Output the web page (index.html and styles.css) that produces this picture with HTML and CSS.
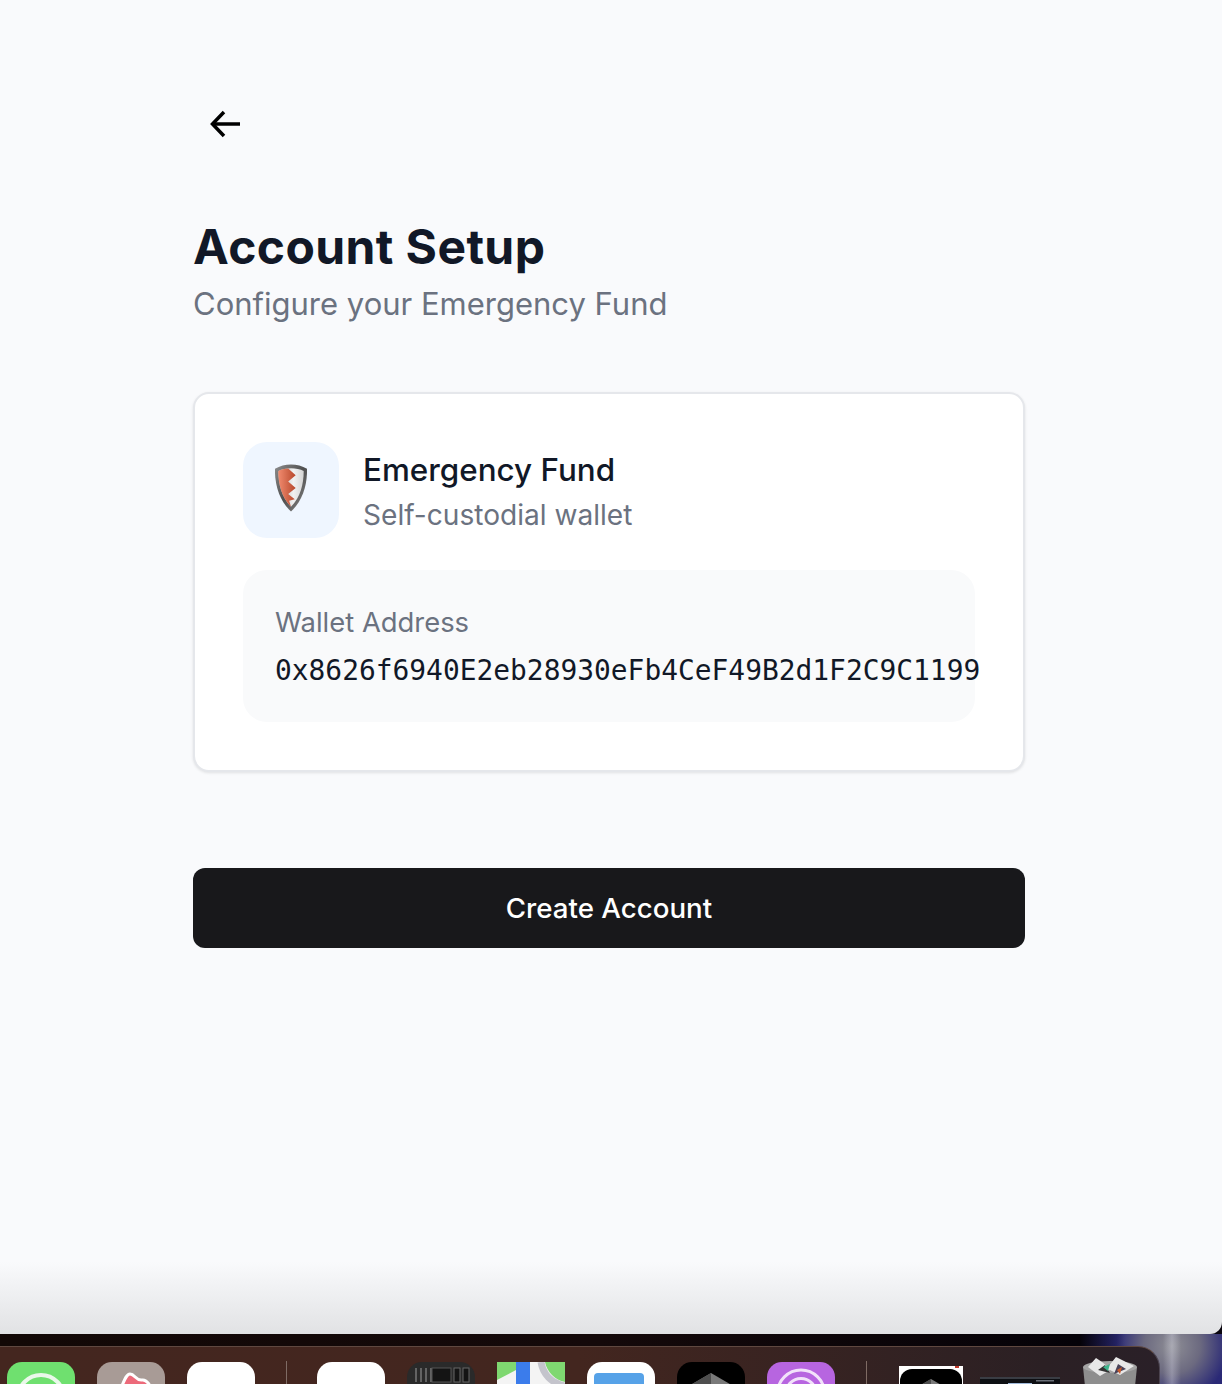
FILE: index.html
```html
<!DOCTYPE html>
<html lang="en">
<head>
    <meta charset="UTF-8">
    <meta name="viewport" content="width=device-width, initial-scale=1.0">
    <title>Account Setup</title>

    <link rel="stylesheet" href="styles.css">
</head>
<body>
<div class="page">
    <div class="container">
        <button class="back" aria-label="Back">
            <svg width="32" height="28" viewBox="0 0 32 28" fill="none" stroke="#000" stroke-width="3.5" stroke-linejoin="miter">
                <path d="M30 14H3"/>
                <path d="M14 2L2.500 14L14 26"/>
            </svg>
        </button>

        <h1>Account Setup</h1>
        <p class="subtitle">Configure your Emergency Fund</p>

        <div class="card">
            <div class="card-head">
                <div class="logo">
                    <svg width="32" height="48" viewBox="0 0 34 50">
                        <defs>
                            <linearGradient id="rim" x1="0" y1="0" x2="1" y2="1">
                                <stop offset="0" stop-color="#8d8d8d"/>
                                <stop offset="0.5" stop-color="#4f4f4f"/>
                                <stop offset="1" stop-color="#8a8a8a"/>
                            </linearGradient>
                            <linearGradient id="red" x1="0" y1="0" x2="1" y2="0">
                                <stop offset="0" stop-color="#f08a6e"/>
                                <stop offset="1" stop-color="#b8482c"/>
                            </linearGradient>
                            <linearGradient id="steel" x1="0" y1="0" x2="1" y2="0">
                                <stop offset="0" stop-color="#b9b9b9"/>
                                <stop offset="0.6" stop-color="#f1f1f1"/>
                                <stop offset="1" stop-color="#d4d4d4"/>
                            </linearGradient>
                        </defs>
                        <path d="M17 0C23 0 29 1.500 34 4.500C34.500 22 29 39 17 50C5 39 -.5 22 0 4.500C5 1.500 11 0 17 0Z" fill="url(#rim)"/>
                        <path d="M17 4C22 4 27 5 30.500 7C30.500 21 27 35 17 45C7 35 3.500 21 3.500 7C7 5 12 4 17 4Z" fill="url(#steel)"/>
                        <path d="M14 4.200C10 4.500 6.500 5.300 3.500 7C3.500 21 7 35 17 45L15 38.500L21 37L14 31.500L22 25L14 18L22 11.500Z" fill="url(#red)"/>
                    </svg>
                </div>
                <div class="card-title">
                    <h2>Emergency Fund</h2>
                    <p>Self-custodial wallet</p>
                </div>
            </div>
            <div class="address-box">
                <p class="address-label">Wallet Address</p>
                <p class="address">0x8626f6940E2eb28930eFb4CeF49B2d1F2C9C1199</p>
            </div>
        </div>

        <button class="create">Create Account</button>
    </div>
</div>

<div class="desktop">
    <div class="dock">
        <svg class="app" viewBox="0 0 68 68"><rect width="68" height="68" rx="15" fill="#6fe06f"/><circle cx="34" cy="36" r="23" fill="none" stroke="#eaf8ea" stroke-width="4"/></svg>
        <svg class="app" viewBox="0 0 68 68"><rect width="68" height="68" rx="15" fill="#a89b96"/><path d="M20 34C26 24 28 12 33 12C38 12 39 19 45 18C51 17 54 26 58 34Z" fill="#ec6a7a" stroke="#fff" stroke-width="3"/></svg>
        <svg class="app" viewBox="0 0 68 68"><rect width="68" height="68" rx="15" fill="#fff"/></svg>
        <span class="sep"></span>
        <svg class="app" viewBox="0 0 68 68"><rect width="68" height="68" rx="15" fill="#fff"/></svg>
        <svg class="app" viewBox="0 0 68 68"><rect width="68" height="68" rx="15" fill="#2a2a2a"/><path d="M9 6v14M14 6v14M19 6v14M24 6v14" stroke="#777" stroke-width="1.500"/><rect x="25" y="6" width="19" height="14" fill="#141414" stroke="#555"/><rect x="47" y="6" width="6" height="14" fill="#141414" stroke="#666"/><rect x="56" y="6" width="6" height="14" fill="#141414" stroke="#666"/></svg>
        <svg class="app" viewBox="0 0 68 68"><rect width="68" height="68" rx="15" fill="#f4f4f4"/><path d="M0 0H19V8L0 18Z" fill="#7fd870"/><path d="M19 0H33V30H19Z" fill="#3b7ceb"/><path d="M48 0H68V20C58 18 50 10 48 0Z" fill="#7fd870"/><path d="M44 0C46 12 54 21 68 24" fill="none" stroke="#c4c4cc" stroke-width="7"/></svg>
        <svg class="app" viewBox="0 0 68 68"><rect width="68" height="68" rx="15" fill="#fff"/><rect x="7" y="11" width="50" height="50" rx="4" fill="#56a2e8"/></svg>
        <svg class="app" viewBox="0 0 68 68"><rect width="68" height="68" rx="15" fill="#000"/><path d="M34 11L10 25H58Z" fill="#7a7a7a"/><path d="M34 11L10 25H34Z" fill="#4e4e4e"/></svg>
        <svg class="app" viewBox="0 0 68 68"><rect width="68" height="68" rx="15" fill="#b765e0"/><circle cx="34" cy="31.500" r="23.500" fill="none" stroke="#f2e2fa" stroke-width="3"/><circle cx="34" cy="31.500" r="15" fill="none" stroke="#f2e2fa" stroke-width="3"/></svg>
        <span class="sep"></span>
        <svg class="thumb-app" viewBox="0 0 64 60"><rect width="64" height="60" fill="#fff"/><rect x="1" y="3" width="62" height="57" rx="12" fill="#000"/><path d="M32 13L8 27H56Z" fill="#7a7a7a"/><path d="M32 13L8 27H32Z" fill="#4e4e4e"/><rect x="56" y="0" width="4" height="2" fill="#c0392b"/></svg>
        <svg class="thumb-shot" viewBox="0 0 80 60"><rect width="80" height="60" fill="#0d0f13"/><rect width="80" height="2" fill="#3a3d44"/><rect x="28" y="6" width="24" height="30" fill="#9fb8d8"/><rect x="4" y="8" width="8" height="1.500" fill="#cfcfcf"/><rect x="56" y="3" width="18" height="1.500" fill="#6a6f78"/></svg>
        <svg class="trash" viewBox="0 0 60 60">
            <path d="M3 12H57L52 60H8Z" fill="#8e8e8e"/>
            <ellipse cx="30" cy="12" rx="27" ry="6" fill="#a4a4a4"/>
            <path d="M8 12L16 3L22 7L28 12L36 2L44 6L54 11L40 20L30 15L20 21Z" fill="#e8e8e8"/>
            <path d="M18 15L25 10L30 18Z" fill="#333"/>
            <path d="M23 12L30 9L28 16Z" fill="#3fb48c"/>
            <path d="M34 19L38 9L46 14Z" fill="#4a4258"/>
            <path d="M37 15L42 12L40 19Z" fill="#c85a2c"/>
        </svg>
    </div>
</div>
</body>
</html>
```

FILE: styles.css
```css
* { box-sizing: border-box; }
html, body { margin: 0; height: 100%; }
body { font-family: Inter, "Liberation Sans", sans-serif; color: #111827; height: 1384px; overflow: hidden; display: flex; flex-direction: column; background: #0b0710; }
p, h1, h2 { margin: 0; }

.page { height: 1334px; flex: none; padding: 96px 0 0 193px; background: linear-gradient(#f9fafc 0, #f9fafc 1262px, #e1e2e4 1334px); border-bottom-right-radius: 12px; }
.container { width: 832px; }
.back { display: block; width: 64px; height: 56px; margin: 0; padding: 0 0 0 17px; border: 0; background: none; }
.back svg { display: block; }

h1 { margin-top: 66px; font-size: 48px; letter-spacing: .4px; line-height: 58px; font-weight: 700; color: #111827; }
.subtitle { margin-top: 8px; font-size: 31px; line-height: 40px; color: #6b7280; }

.card { margin-top: 68px; height: 380px; padding: 48px; background: #fff; border: 2px solid #e5e7eb; border-radius: 16px; box-shadow: 0 1px 3px rgba(0, 0, 0, .1); }
.card-head { display: flex; align-items: flex-start; gap: 24px; }
.logo { width: 96px; height: 96px; padding-bottom: 4px; display: flex; align-items: center; justify-content: center; background: #eff6ff; border-radius: 24px; }
.card-title { padding-top: 8px; }
.card-title h2 { font-size: 31.400px; line-height: 40px; font-weight: 500; color: #111827; }
.card-title p { margin-top: 5px; font-size: 28.100px; line-height: 40px; color: #6b7280; }

.address-box { margin-top: 32px; height: 152px; padding: 32px 0 0 32px; background: #f9fafb; border-radius: 24px; }
.address-label { font-size: 27.400px; line-height: 40px; color: #6b7280; }
.address { margin-top: 9px; font-family: "DejaVu Sans Mono", monospace; font-size: 27.900px; line-height: 40px; color: #111827; white-space: nowrap; }

.create { display: block; width: 100%; height: 80px; margin-top: 96px; border: 0; border-radius: 12px; background: #18181b; color: #fff; font-family: inherit; font-size: 27.700px; font-weight: 500; }

.desktop { flex: 1; padding-top: 12px; overflow: hidden; background:
    linear-gradient(90deg, #120806 0, #14090a 600px, #050208 1080px, transparent 1125px) 0 0 / 100% 12px no-repeat,
    linear-gradient(90deg, transparent 1163px, rgba(220, 220, 235, .35) 1172px, transparent 1181px),
    radial-gradient(circle at 1172px 12px, #8f8f96 0, #6c6a80 28px, #2a2976 56px, #0e0b30 100%),
    #0b0710; }
.dock { width: 1160px; height: 38px; display: flex; align-items: flex-start; padding: 15px 0 0 7px; overflow: hidden; background: linear-gradient(90deg, #44261f 0, #43261f 50%, #2b2024 90%, #2a2028 100%); border-top: 1px solid #5f4840; border-right: 1px solid #4c4450; border-top-right-radius: 22px; }
.app { width: 68px; height: 68px; flex: none; margin-right: 22px; }
.sep { width: 1px; height: 40px; flex: none; margin: -1px 30px 0 9px; background: #7f6b64; }
.thumb-app { width: 64px; height: 60px; flex: none; margin: 4px 17px 0 2px; }
.thumb-shot { width: 80px; height: 60px; flex: none; margin: 15px 20px 0 0; }
.trash { width: 60px; height: 60px; flex: none; margin-top: -7px; }
```
